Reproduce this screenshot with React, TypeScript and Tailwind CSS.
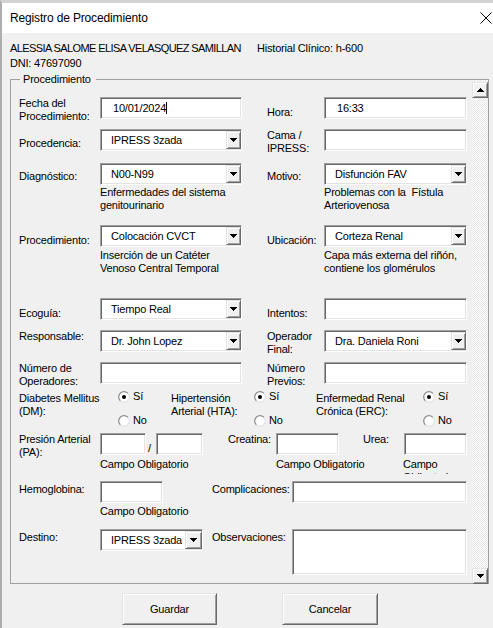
import React from "react";

const sunken =
  "bg-white border border-t-[#a0a0a0] border-l-[#a0a0a0] border-r-white border-b-white shadow-[inset_1px_1px_0_#696969,inset_-1px_-1px_0_#e3e3e3]";
const raised =
  "bg-[#f0f0f0] border border-t-[#e3e3e3] border-l-[#e3e3e3] border-r-[#696969] border-b-[#696969] shadow-[inset_1px_1px_0_#ffffff,inset_-1px_-1px_0_#a0a0a0]";

function Arrow({ up = false }: { up?: boolean }) {
  return (
    <svg width="7" height="4" viewBox="0 0 7 4" shapeRendering="crispEdges">
      {up ? <path d="M3.5 0L7 4H0z" fill="#000" /> : <path d="M0 0H7L3.5 4z" fill="#000" />}
    </svg>
  );
}

function TextBox({ w, value, caret, h }: { w: string; value?: string; caret?: boolean; h?: string }) {
  return (
    <div className={`${sunken} ${w} ${h ?? "h-[22px]"} shrink-0 flex items-center pl-[12px] leading-[13px]`}>
      {value}
      {caret && <span className="inline-block w-px h-[12px] bg-black" />}
    </div>
  );
}

function Select({ w, value, btn }: { w: string; value: string; btn?: string }) {
  return (
    <div className={`${sunken} ${w} h-[22px] shrink-0 flex items-center`}>
      <div className="flex-1 pl-[10px] leading-[13px] whitespace-nowrap">{value}</div>
      <div className={`${raised} ${btn ?? "w-[15px]"} h-[18px] flex items-center justify-center`}>
        <Arrow />
      </div>
    </div>
  );
}

function Radio({ checked }: { checked?: boolean }) {
  return (
    <svg width="12" height="12" viewBox="0 0 12 12">
      <defs>
        <linearGradient id="rg" x1="0" y1="0" x2="1" y2="1">
          <stop offset="0.45" stopColor="#8a8a8a" />
          <stop offset="0.55" stopColor="#e3e3e3" />
        </linearGradient>
      </defs>
      <circle cx="6" cy="6" r="5.3" fill="#fff" stroke="url(#rg)" strokeWidth="1.2" />
      {checked && <circle cx="6" cy="6" r="2" fill="#000" />}
    </svg>
  );
}

function RadioGroup({ w }: { w: string }) {
  return (
    <div className={`${w} shrink-0 flex flex-col gap-[11px]`}>
      <div className="flex items-center h-[13px] gap-[3px]">
        <Radio checked />
        <span className="leading-[13px]">Sí</span>
      </div>
      <div className="flex items-center h-[13px] gap-[3px]">
        <Radio />
        <span className="leading-[13px]">No</span>
      </div>
    </div>
  );
}

function Lbl({ w, pt, children }: { w: string; pt?: string; children: React.ReactNode }) {
  return <div className={`${w} ${pt ?? ""} shrink-0 leading-[13px]`}>{children}</div>;
}

function ScrollBtn({ up }: { up?: boolean }) {
  return (
    <div className={`${raised} w-[16px] h-[16px] flex items-center justify-center`}>
      <Arrow up={up} />
    </div>
  );
}

export default function App() {
  return (
    <div className="w-[493px] h-[628px] overflow-hidden bg-[#f0f0f0] border-t-[3px] border-t-[#d2d2d2] border-l-[2px] border-l-[#adadad] text-black text-[11px] tracking-[-0.2px] font-['Liberation_Sans','Arial',sans-serif] flex flex-col">
      {/* Title bar */}
      <div className="h-[30px] bg-white flex items-center justify-between pl-[8px] pr-[1px] shrink-0">
        <span className="text-[12px] tracking-[-0.15px]">Registro de Procedimiento</span>
        <svg width="12" height="12" viewBox="0 0 12 12">
          <path d="M0.5 0.5L11.5 11.5M11.5 0.5L0.5 11.5" stroke="#000" strokeWidth="1" />
        </svg>
      </div>

      {/* Patient info */}
      <div className="pl-[8px] pt-[8px] leading-[15px]">
        <div className="flex">
          <span className="w-[247px] tracking-[-0.6px] whitespace-nowrap">ALESSIA SALOME ELISA VELASQUEZ SAMILLAN</span>
          <span>Historial Clínico: h-600</span>
        </div>
        <div>DNI: 47697090</div>
      </div>

      {/* Fieldset */}
      <div className="ml-[8px] mt-[8px] w-[479px] h-[505px] border border-[#a0a0a0] flex shrink-0">
        <div className="flex-1 pl-[8px] flex flex-col">
          <div className="-mt-[7px] ml-[1px] pl-[3px] pr-[5px] w-fit h-[13px] leading-[13px] bg-[#f0f0f0]">Procedimiento</div>

          {/* Row 1 */}
          <div className="flex h-[32px] mt-[11px]">
            <Lbl w="w-[81px]">Fecha del<br />Procedimiento:</Lbl>
            <TextBox w="w-[142px]" value="10/01/2024" caret />
            <div className="w-[25px] shrink-0" />
            <Lbl w="w-[57px]" pt="pt-[9px]">Hora:</Lbl>
            <TextBox w="w-[143px]" value="16:33" />
          </div>

          {/* Row 2 */}
          <div className="flex h-[34px]">
            <Lbl w="w-[81px]" pt="pt-[8px]">Procedencia:</Lbl>
            <Select w="w-[142px]" value="IPRESS 3zada" />
            <div className="w-[25px] shrink-0" />
            <Lbl w="w-[57px]">Cama /<br />IPRESS:</Lbl>
            <TextBox w="w-[143px]" />
          </div>

          {/* Row 3 */}
          <div className="flex h-[62px]">
            <Lbl w="w-[81px]" pt="pt-[7px]">Diagnóstico:</Lbl>
            <div className="w-[142px] shrink-0 flex flex-col">
              <Select w="w-[142px]" value="N00-N99" />
              <div className="leading-[13px] mt-[1px]">Enfermedades del sistema<br />genitourinario</div>
            </div>
            <div className="w-[25px] shrink-0" />
            <Lbl w="w-[57px]" pt="pt-[7px]">Motivo:</Lbl>
            <div className="w-[143px] shrink-0 flex flex-col">
              <Select w="w-[143px]" value="Disfunción FAV" />
              <div className="leading-[13px] mt-[1px] whitespace-pre">{"Problemas con la  Fístula\nArteriovenosa"}</div>
            </div>
          </div>

          {/* Row 4 */}
          <div className="flex h-[73px]">
            <Lbl w="w-[81px]" pt="pt-[9px]">Procedimiento:</Lbl>
            <div className="w-[142px] shrink-0 flex flex-col">
              <Select w="w-[142px]" value="Colocación CVCT" />
              <div className="leading-[13px] mt-[2px] whitespace-nowrap">Inserción de un Catéter<br />Venoso Central Temporal</div>
            </div>
            <div className="w-[25px] shrink-0" />
            <Lbl w="w-[57px]" pt="pt-[9px]">Ubicación:</Lbl>
            <div className="w-[143px] shrink-0 flex flex-col">
              <Select w="w-[143px]" value="Corteza Renal" />
              <div className="leading-[13px] mt-[2px] whitespace-nowrap">Capa más externa del riñón,<br />contiene los glomérulos</div>
            </div>
          </div>

          {/* Row 5 */}
          <div className="flex h-[32px]">
            <Lbl w="w-[81px]" pt="pt-[9px]">Ecoguía:</Lbl>
            <Select w="w-[142px]" value="Tiempo Real" />
            <div className="w-[25px] shrink-0" />
            <Lbl w="w-[57px]" pt="pt-[9px]">Intentos:</Lbl>
            <TextBox w="w-[143px]" />
          </div>

          {/* Row 6 */}
          <div className="flex h-[32px]">
            <Lbl w="w-[81px]">Responsable:</Lbl>
            <Select w="w-[142px]" value="Dr. John Lopez" />
            <div className="w-[25px] shrink-0" />
            <Lbl w="w-[57px]">Operador<br />Final:</Lbl>
            <Select w="w-[143px]" value="Dra. Daniela Roni" />
          </div>

          {/* Row 7 */}
          <div className="flex h-[28px]">
            <Lbl w="w-[81px]">Número de<br />Operadores:</Lbl>
            <TextBox w="w-[142px]" />
            <div className="w-[25px] shrink-0" />
            <Lbl w="w-[57px]">Número<br />Previos:</Lbl>
            <TextBox w="w-[143px]" />
          </div>

          {/* Row 8 - radios */}
          <div className="flex h-[43px]">
            <Lbl w="w-[99px]" pt="pt-[2px]">Diabetes Mellitus<br />(DM):</Lbl>
            <RadioGroup w="w-[53px]" />
            <Lbl w="w-[83px]" pt="pt-[2px]">Hipertensión<br />Arterial (HTA):</Lbl>
            <RadioGroup w="w-[62px]" />
            <Lbl w="w-[107px]" pt="pt-[2px]">Enfermedad Renal<br />Crónica (ERC):</Lbl>
            <RadioGroup w="w-[40px]" />
          </div>

          {/* Row 9 - PA */}
          <div className="flex h-[48px]">
            <Lbl w="w-[81px]">Presión Arterial<br />(PA):</Lbl>
            <div className="w-[46px] shrink-0 flex flex-col">
              <TextBox w="w-[46px]" />
              <div className="leading-[13px] mt-[3px] whitespace-nowrap">Campo Obligatorio</div>
            </div>
            <div className="w-[10px] shrink-0 pt-[9px] pl-[2px] leading-[13px]">/</div>
            <TextBox w="w-[47px]" />
            <div className="w-[25px] shrink-0" />
            <Lbl w="w-[48px]">Creatina:</Lbl>
            <div className="w-[63px] shrink-0 flex flex-col">
              <TextBox w="w-[63px]" />
              <div className="leading-[13px] mt-[3px] whitespace-nowrap">Campo Obligatorio</div>
            </div>
            <div className="w-[24px] shrink-0" />
            <Lbl w="w-[41px]">Urea:</Lbl>
            <div className="w-[63px] shrink-0 flex flex-col">
              <TextBox w="w-[63px]" />
              <div className="-ml-px w-[62px] h-[16px] overflow-hidden leading-[13px] mt-[3px]">Campo Obligatorio</div>
            </div>
          </div>

          {/* Row 10 - Hemoglobina */}
          <div className="flex h-[48px]">
            <Lbl w="w-[81px]" pt="pt-[2px]">Hemoglobina:</Lbl>
            <div className="w-[63px] shrink-0 flex flex-col">
              <TextBox w="w-[63px]" />
              <div className="leading-[13px] mt-[2px] whitespace-nowrap">Campo Obligatorio</div>
            </div>
            <div className="w-[49px] shrink-0" />
            <Lbl w="w-[80px]" pt="pt-[2px]">Complicaciones:</Lbl>
            <TextBox w="w-[175px]" />
          </div>

          {/* Row 11 - Destino */}
          <div className="flex">
            <Lbl w="w-[81px]" pt="pt-[2px]">Destino:</Lbl>
            <Select w="w-[103px]" value="IPRESS 3zada" btn="w-[17px]" />
            <div className="w-[9px] shrink-0" />
            <Lbl w="w-[80px]" pt="pt-[2px]">Observaciones:</Lbl>
            <TextBox w="w-[175px]" h="h-[46px]" />
          </div>
        </div>

        {/* Scrollbar */}
        <div className="w-[16px] mt-[2px] -mb-px flex flex-col shrink-0">
          <ScrollBtn up />
          <div className="flex-1 bg-[image:repeating-conic-gradient(#ffffff_0%_25%,#e6e6e6_0%_50%)] bg-[length:2px_2px]" />
          <ScrollBtn />
        </div>
      </div>

      {/* Buttons */}
      <div className="flex mt-[9px]">
        <div className={`${raised} ml-[120px] w-[95px] h-[32px] flex items-center justify-center`}>Guardar</div>
        <div className={`${raised} ml-[65px] w-[96px] h-[32px] flex items-center justify-center`}>Cancelar</div>
      </div>
    </div>
  );
}
